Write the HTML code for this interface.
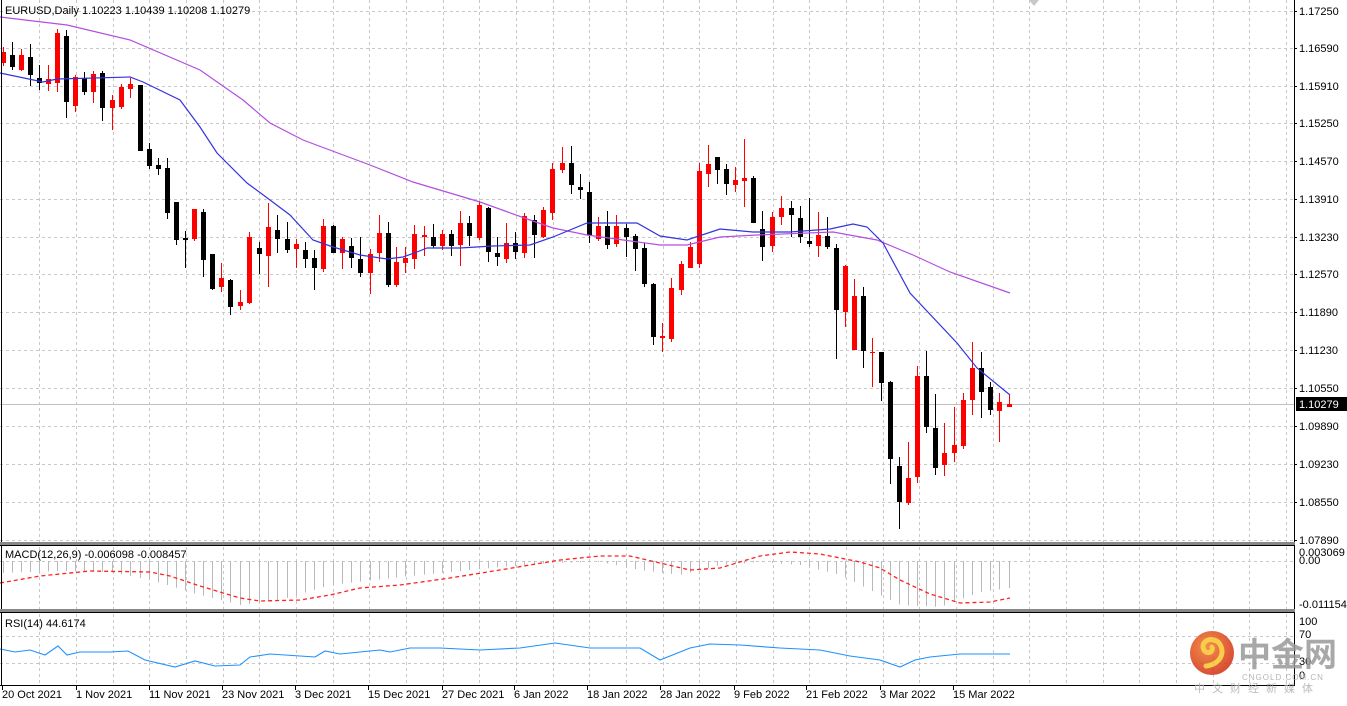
<!DOCTYPE html>
<html><head><meta charset="utf-8"><style>
html,body{margin:0;padding:0;background:#fff;width:1347px;height:706px;overflow:hidden}
svg{display:block}
text{font-family:"Liberation Sans","Noto Sans CJK SC",sans-serif;font-size:11px;fill:#000}
</style></head><body>
<svg id="s" width="1347" height="706" xmlns="http://www.w3.org/2000/svg">
<rect width="1347" height="706" fill="#fff"/>
<g id="grid"></g>
<g id="main"></g>
<defs><radialGradient id="lg" cx="40%" cy="35%" r="70%"><stop offset="0" stop-color="#f07a2a"/><stop offset="1" stop-color="#d12a12"/></radialGradient></defs>
<g opacity="0.85">
<circle cx="1212" cy="653" r="22" fill="url(#lg)"/>
<path d="M1206 666 C1222 664 1226 650 1218 642 C1210 636 1200 642 1204 650 C1207 655 1214 652 1212 647" fill="none" stroke="#f7c52a" stroke-width="5" stroke-linecap="round"/>
<text x="1238" y="666" style="font-size:33px;fill:#9a9a9a;font-weight:bold;font-family:'Noto Sans CJK SC',sans-serif">中金网</text>
<text x="1242" y="680" style="font-size:8px;fill:#aaa;letter-spacing:1px">CNGOLD.COM.CN</text>
<text x="1194" y="692" style="font-size:11px;fill:#b0b0b0;letter-spacing:7px;font-family:'Noto Sans CJK SC',sans-serif">中文财经新媒体</text>
</g>
</svg>
<script>
var NS="http://www.w3.org/2000/svg",S=document.getElementById('s'),G=document.getElementById('grid'),M=document.getElementById('main');
function el(t,a,p,txt){var e=document.createElementNS(NS,t);for(var k in a)e.setAttribute(k,a[k]);if(txt!=null)e.textContent=txt;(p||M).appendChild(e);return e;}
var gs={stroke:'#c8c8c8','stroke-width':1,'stroke-dasharray':'3,3'};
for(var i=0;i<35;i++){var x=Math.round(39.3+i*36.67)+.5;if(x>1293)break;
 [[0,542],[547,610],[614,684]].forEach(function(r){el('line',Object.assign({x1:x,x2:x,y1:r[0],y2:r[1]},gs),G);});}
var pl=[["1.17250",11],["1.16590",48],["1.15910",86],["1.15250",123],["1.14570",161],["1.13910",199],["1.13230",237],["1.12570",274],["1.11890",312],["1.11230",350],["1.10550",388],["1.09890",426],["1.09230",464],["1.08550",502],["1.07890",540]];
pl.forEach(function(p){el('line',Object.assign({x1:0,x2:1294,y1:p[1]+.5,y2:p[1]+.5},gs),G);el('line',{x1:1294,x2:1297,y1:p[1]+.5,y2:p[1]+.5,stroke:'#000'},G);el('text',{x:1299,y:p[1]+4},G,p[0]);});
[561,636,663].forEach(function(y){el('line',Object.assign({x1:0,x2:1294,y1:y+.5,y2:y+.5},gs),G);});
el('line',{x1:0,x2:1294,y1:404.5,y2:404.5,stroke:'#c0c0c0'},G);
var C=[[3,1,52,63,47,66],[12,0,55,67,42,70],[21,1,55,70,49,71],[30,0,57,75,44,86],[39,0,78,83,65,90],[48,1,79,84,65,91],[57,1,33,83,29,92],[66,0,36,102,30,118],[75,1,77,106,75,112],[84,0,78,92,72,95],[93,1,74,92,71,103],[102,0,73,108,71,121],[112,1,100,108,95,130],[121,1,87,107,84,109],[130,1,84,89,78,98],[140,0,85,151,85,151],[149,0,149,166,143,169],[158,0,165,169,158,175],[167,0,168,213,158,219],[176,0,202,240,202,245],[185,0,238,240,231,268],[194,1,209,239,209,241],[203,0,212,260,209,277],[212,0,254,289,254,290],[221,1,278,287,263,292],[230,0,280,307,279,315],[240,1,302,306,290,310],[249,1,237,303,232,304],[259,0,248,254,242,274],[268,1,227,256,203,287],[277,0,230,239,215,253],[287,0,239,250,222,253],[296,1,244,249,239,268],[305,0,250,259,242,268],[314,0,258,268,250,290],[323,1,226,269,219,272],[333,0,226,253,225,253],[342,1,239,253,237,269],[351,0,246,258,238,268],[360,0,259,273,237,277],[370,1,254,273,249,294],[379,1,233,253,215,262],[388,0,233,285,222,287],[396,1,262,285,247,287],[405,1,258,263,247,273],[414,1,234,259,225,269],[424,1,235,237,226,256],[433,0,237,246,224,248],[442,1,234,246,230,250],[451,0,234,246,230,256],[460,1,223,245,211,266],[469,0,223,236,216,246],[479,1,205,238,201,240],[488,0,208,252,207,262],[497,0,253,257,237,266],[506,1,243,259,223,263],[515,0,243,252,232,259],[524,1,216,253,213,258],[534,0,220,235,215,258],[543,1,210,237,207,238],[552,1,169,213,163,220],[562,1,163,170,147,173],[571,0,163,185,146,194],[580,0,187,190,174,199],[589,0,192,235,182,243],[598,1,226,239,217,241],[607,0,226,245,211,249],[616,1,226,244,215,247],[626,0,228,237,224,257],[635,0,236,249,234,271],[644,0,248,284,243,287],[653,0,284,337,283,345],[662,1,336,338,323,352],[671,1,288,339,278,342],[681,1,264,290,261,295],[690,1,247,268,242,268],[699,1,171,264,163,268],[708,1,164,174,145,187],[717,0,157,170,157,184],[726,0,169,184,164,195],[735,1,180,185,167,192],[744,1,178,181,139,207],[753,0,178,223,176,223],[762,0,229,247,211,261],[772,1,217,246,212,252],[781,1,208,217,196,225],[791,0,208,215,201,237],[800,0,218,237,206,243],[809,0,241,244,198,247],[818,1,235,246,212,257],[827,0,236,247,217,249],[836,0,248,310,244,359],[845,1,266,312,265,327],[854,1,296,350,279,350],[863,0,296,351,287,368],[872,1,352,353,338,387],[881,0,352,383,352,401],[890,0,382,459,381,484],[899,0,466,502,457,529],[908,1,478,503,442,505],[917,1,376,477,366,483],[926,0,376,427,351,433],[935,0,428,468,394,475],[944,1,453,465,423,476],[954,1,445,453,407,462],[963,1,400,446,393,449],[972,1,368,400,342,415],[981,0,368,392,352,418],[990,0,387,410,382,415],[999,1,402,411,393,442],[1009,1,404,407,395,407]];
C.forEach(function(c){var col=c[1]?'#ff0000':'#000';
 el('line',{x1:c[0]+.5,x2:c[0]+.5,y1:c[4],y2:c[5],stroke:col});
 el('rect',{x:c[0]-2,y:c[2],width:5,height:Math.max(1,c[3]-c[2]),fill:col});});
function pts(a){return a.map(function(p){return p.join(',')}).join(' ');}
var blue=[[0,73],[43,82],[57,79],[130,77],[143,82],[180,100],[200,127],[217,153],[247,183],[270,200],[290,215],[313,240],[333,247],[360,255],[387,259],[403,257],[417,252],[427,248],[460,248],[493,246],[530,245],[553,237],[587,223],[637,223],[660,236],[687,240],[720,229],[753,232],[790,232],[830,229],[853,224],[867,227],[883,243],[910,293],[957,343],[977,368],[1010,395]];
var purp=[[0,17],[67,25],[130,40],[200,70],[243,100],[270,123],[303,140],[370,165],[413,182],[480,202],[530,220],[553,228],[587,235],[660,245],[687,245],[720,237],[757,235],[833,232],[877,240],[913,255],[950,272],[1010,293]];
el('polyline',{points:pts(purp),fill:'none',stroke:'#b44ee0','stroke-width':1.2});
el('polyline',{points:pts(blue),fill:'none',stroke:'#3333dd','stroke-width':1.2});
function interp(a,x){for(var i=1;i<a.length;i++){if(x<=a[i][0]){var t=(x-a[i-1][0])/(a[i][0]-a[i-1][0]);return a[i-1][1]+t*(a[i][1]-a[i-1][1]);}}return a[a.length-1][1];}
var hist=[[0,573],[60,571],[110,572],[150,580],[200,595],[240,605],[280,600],[330,585],[400,577],[450,572],[500,567],[550,563],[600,562],[640,570],[680,575],[720,565],[760,562],[800,565],[840,575],[870,590],[900,605],[940,607],[980,592],[1010,588]];
C.forEach(function(c){var y=interp(hist,c[0]);el('line',{x1:c[0]+.5,x2:c[0]+.5,y1:561,y2:y,stroke:'#b8b8b8'});});
var sig=[[0,583],[40,576],[90,571],[150,572],[170,576],[200,586],[240,598],[260,601],[300,600],[330,595],[360,588],[400,585],[450,578],[500,570],[560,560],[600,556],[630,556],[660,563],[690,570],[720,568],[760,556],[790,552],[820,554],[860,562],[880,568],[900,580],[930,594],[960,603],[990,602],[1010,598]];
el('polyline',{points:pts(sig),fill:'none',stroke:'#ff2020','stroke-width':1.3,'stroke-dasharray':'4,3'});
var rsi=[[0,649],[15,652],[30,650],[45,655],[58,646],[67,655],[80,652],[110,652],[128,651],[145,660],[175,667],[195,661],[215,666],[240,665],[250,657],[270,654],[300,656],[315,657],[325,651],[340,654],[380,650],[390,652],[410,648],[440,648],[480,650],[520,648],[555,643],[590,648],[640,648],[660,660],[690,648],[710,644],[740,645],[780,648],[820,650],[850,656],[880,660],[900,667],[915,660],[930,657],[960,654],[1010,654]];
el('polyline',{points:pts(rsi),fill:'none',stroke:'#1e90ff','stroke-width':1.1});
el('line',{x1:1.5,x2:1.5,y1:0,y2:686,stroke:'#000'});
el('line',{x1:1294.5,x2:1294.5,y1:0,y2:686,stroke:'#000'});
el('rect',{x:0,y:542,width:1295,height:3,fill:'#888'});el('line',{x1:0,x2:1295,y1:545.5,y2:545.5,stroke:'#000'});
el('rect',{x:0,y:609,width:1295,height:3,fill:'#888'});el('line',{x1:0,x2:1295,y1:612.5,y2:612.5,stroke:'#000'});
el('line',{x1:0,x2:1295,y1:685.5,y2:685.5,stroke:'#000'});
el('text',{x:5,y:14},M,'EURUSD,Daily  1.10223 1.10439 1.10208 1.10279');
el('text',{x:5,y:558},M,'MACD(12,26,9) -0.006098 -0.008457');
el('text',{x:5,y:627},M,'RSI(14) 44.6174');
el('rect',{x:1296,y:397,width:51,height:14,fill:'#000'});
el('text',{x:1299,y:408,style:'fill:#fff'},M,'1.10279');
[["0.003069",556],["0.00",564],["-0.011154",608]].forEach(function(p){el('text',{x:1299,y:p[1]},M,p[0]);});
[["100",625],["70",638],["30",665],["0",679]].forEach(function(p){el('text',{x:1299,y:p[1]},M,p[0]);});
var tl=[["20 Oct 2021",2],["1 Nov 2021",76],["11 Nov 2021",149],["23 Nov 2021",222],["3 Dec 2021",295],["15 Dec 2021",368],["27 Dec 2021",442],["6 Jan 2022",514],["18 Jan 2022",587],["28 Jan 2022",660],["9 Feb 2022",734],["21 Feb 2022",806],["3 Mar 2022",880],["15 Mar 2022",953]];
tl.forEach(function(t){el('line',{x1:t[1]+.5,x2:t[1]+.5,y1:686,y2:690,stroke:'#000'});el('text',{x:t[1],y:698},M,t[0]);});
el('polygon',{points:'1029,0 1039,0 1034,6',fill:'#c8c8c8'});
var lg=S.querySelector('g[opacity]');S.appendChild(lg);
</script>
</body></html>
